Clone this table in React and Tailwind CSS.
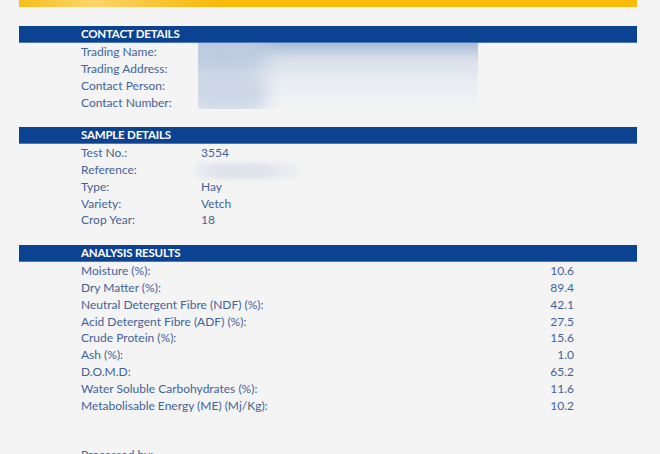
import React from "react";

const font = { fontFamily: "Lato, 'Open Sans', sans-serif" };

function Header({ title }) {
  return (
    <div className="ml-[19px] w-[618px] h-[17px] bg-[#0b4392] border-b border-[#4d78b8] flex items-center pl-[62px]">
      <span className="text-white font-bold text-[11.5px] leading-none tracking-[-0.2px]">{title}</span>
    </div>
  );
}

function Row({ label, value, valueRight }) {
  return (
    <div className="h-[16.9px] flex items-center pt-[1px] pl-[81px] text-[12px] text-[#42639a] leading-none">
      <span className="w-[120px] shrink-0 whitespace-nowrap">{label}</span>
      {value !== undefined && <span>{value}</span>}
      {valueRight !== undefined && (
        <span className="ml-auto mr-[86px]">{valueRight}</span>
      )}
    </div>
  );
}

export default function App() {
  const analysis = [
    ["Moisture (%):", "10.6"],
    ["Dry Matter (%):", "89.4"],
    ["Neutral Detergent Fibre (NDF) (%):", "42.1"],
    ["Acid Detergent Fibre (ADF) (%):", "27.5"],
    ["Crude Protein (%):", "15.6"],
    ["Ash (%):", "1.0"],
    ["D.O.M.D:", "65.2"],
    ["Water Soluble Carbohydrates (%):", "11.6"],
    ["Metabolisable Energy (ME) (Mj/Kg):", "10.2"],
  ];
  return (
    <div className="w-[660px] h-[454px] overflow-hidden bg-[#f4f4f4]" style={font}>
      <div className="ml-[19px] w-[618px] h-[7px] bg-[linear-gradient(90deg,#f6bd1c_0%,#fcd66a_12%,#f9c437_22%,#f8bb0a_32%,#f8bb0a_100%)]" />
      <div className="h-[19px]" />
      <Header title="CONTACT DETAILS" />
      <div className="relative">
        <Row label="Trading Name:" />
        <Row label="Trading Address:" />
        <Row label="Contact Person:" />
        <Row label="Contact Number:" />
        <div className="absolute left-[198px] top-0 w-[280px] h-[66px] overflow-hidden bg-[#edf0f4]">
          <div className="absolute inset-0 bg-[linear-gradient(180deg,#a9bcd7_0%,#d9e0ea_25%,#e8ecf2_55%,#f2f4f6_100%)]" />
          <div className="absolute left-[-10px] top-[30px] w-[80px] h-[40px] rounded-full bg-[#cdd7e6] blur-[8px]" />
          <div className="absolute left-[-20px] top-[-10px] w-[90px] h-[40px] rounded-full bg-[#bccbe0] blur-[10px]" />
        </div>
      </div>
      <div className="h-[16.4px]" />
      <Header title="SAMPLE DETAILS" />
      <div className="relative">
        <Row label="Test No.:" value="3554" />
        <Row label="Reference:" value="" />
        <Row label="Type:" value="Hay" />
        <Row label="Variety:" value="Vetch" />
        <Row label="Crop Year:" value="18" />
        <div className="absolute left-[196px] top-[19px] w-[104px] h-[16px] rounded-[3px] bg-[linear-gradient(90deg,#e9ecf0_0%,#dde2ea_30%,#dfe4eb_60%,#eef0f2_100%)] blur-[2px]" />
      </div>
      <div className="h-[16.5px]" />
      <Header title="ANALYSIS RESULTS" />
      <div>
        {analysis.map(([l, v]) => (
          <Row key={l} label={l} valueRight={v} />
        ))}
      </div>
      <div className="h-[35px]" />
      <div className="pl-[81px] text-[12px] text-[#42639a] leading-none">Processed by:</div>
    </div>
  );
}
